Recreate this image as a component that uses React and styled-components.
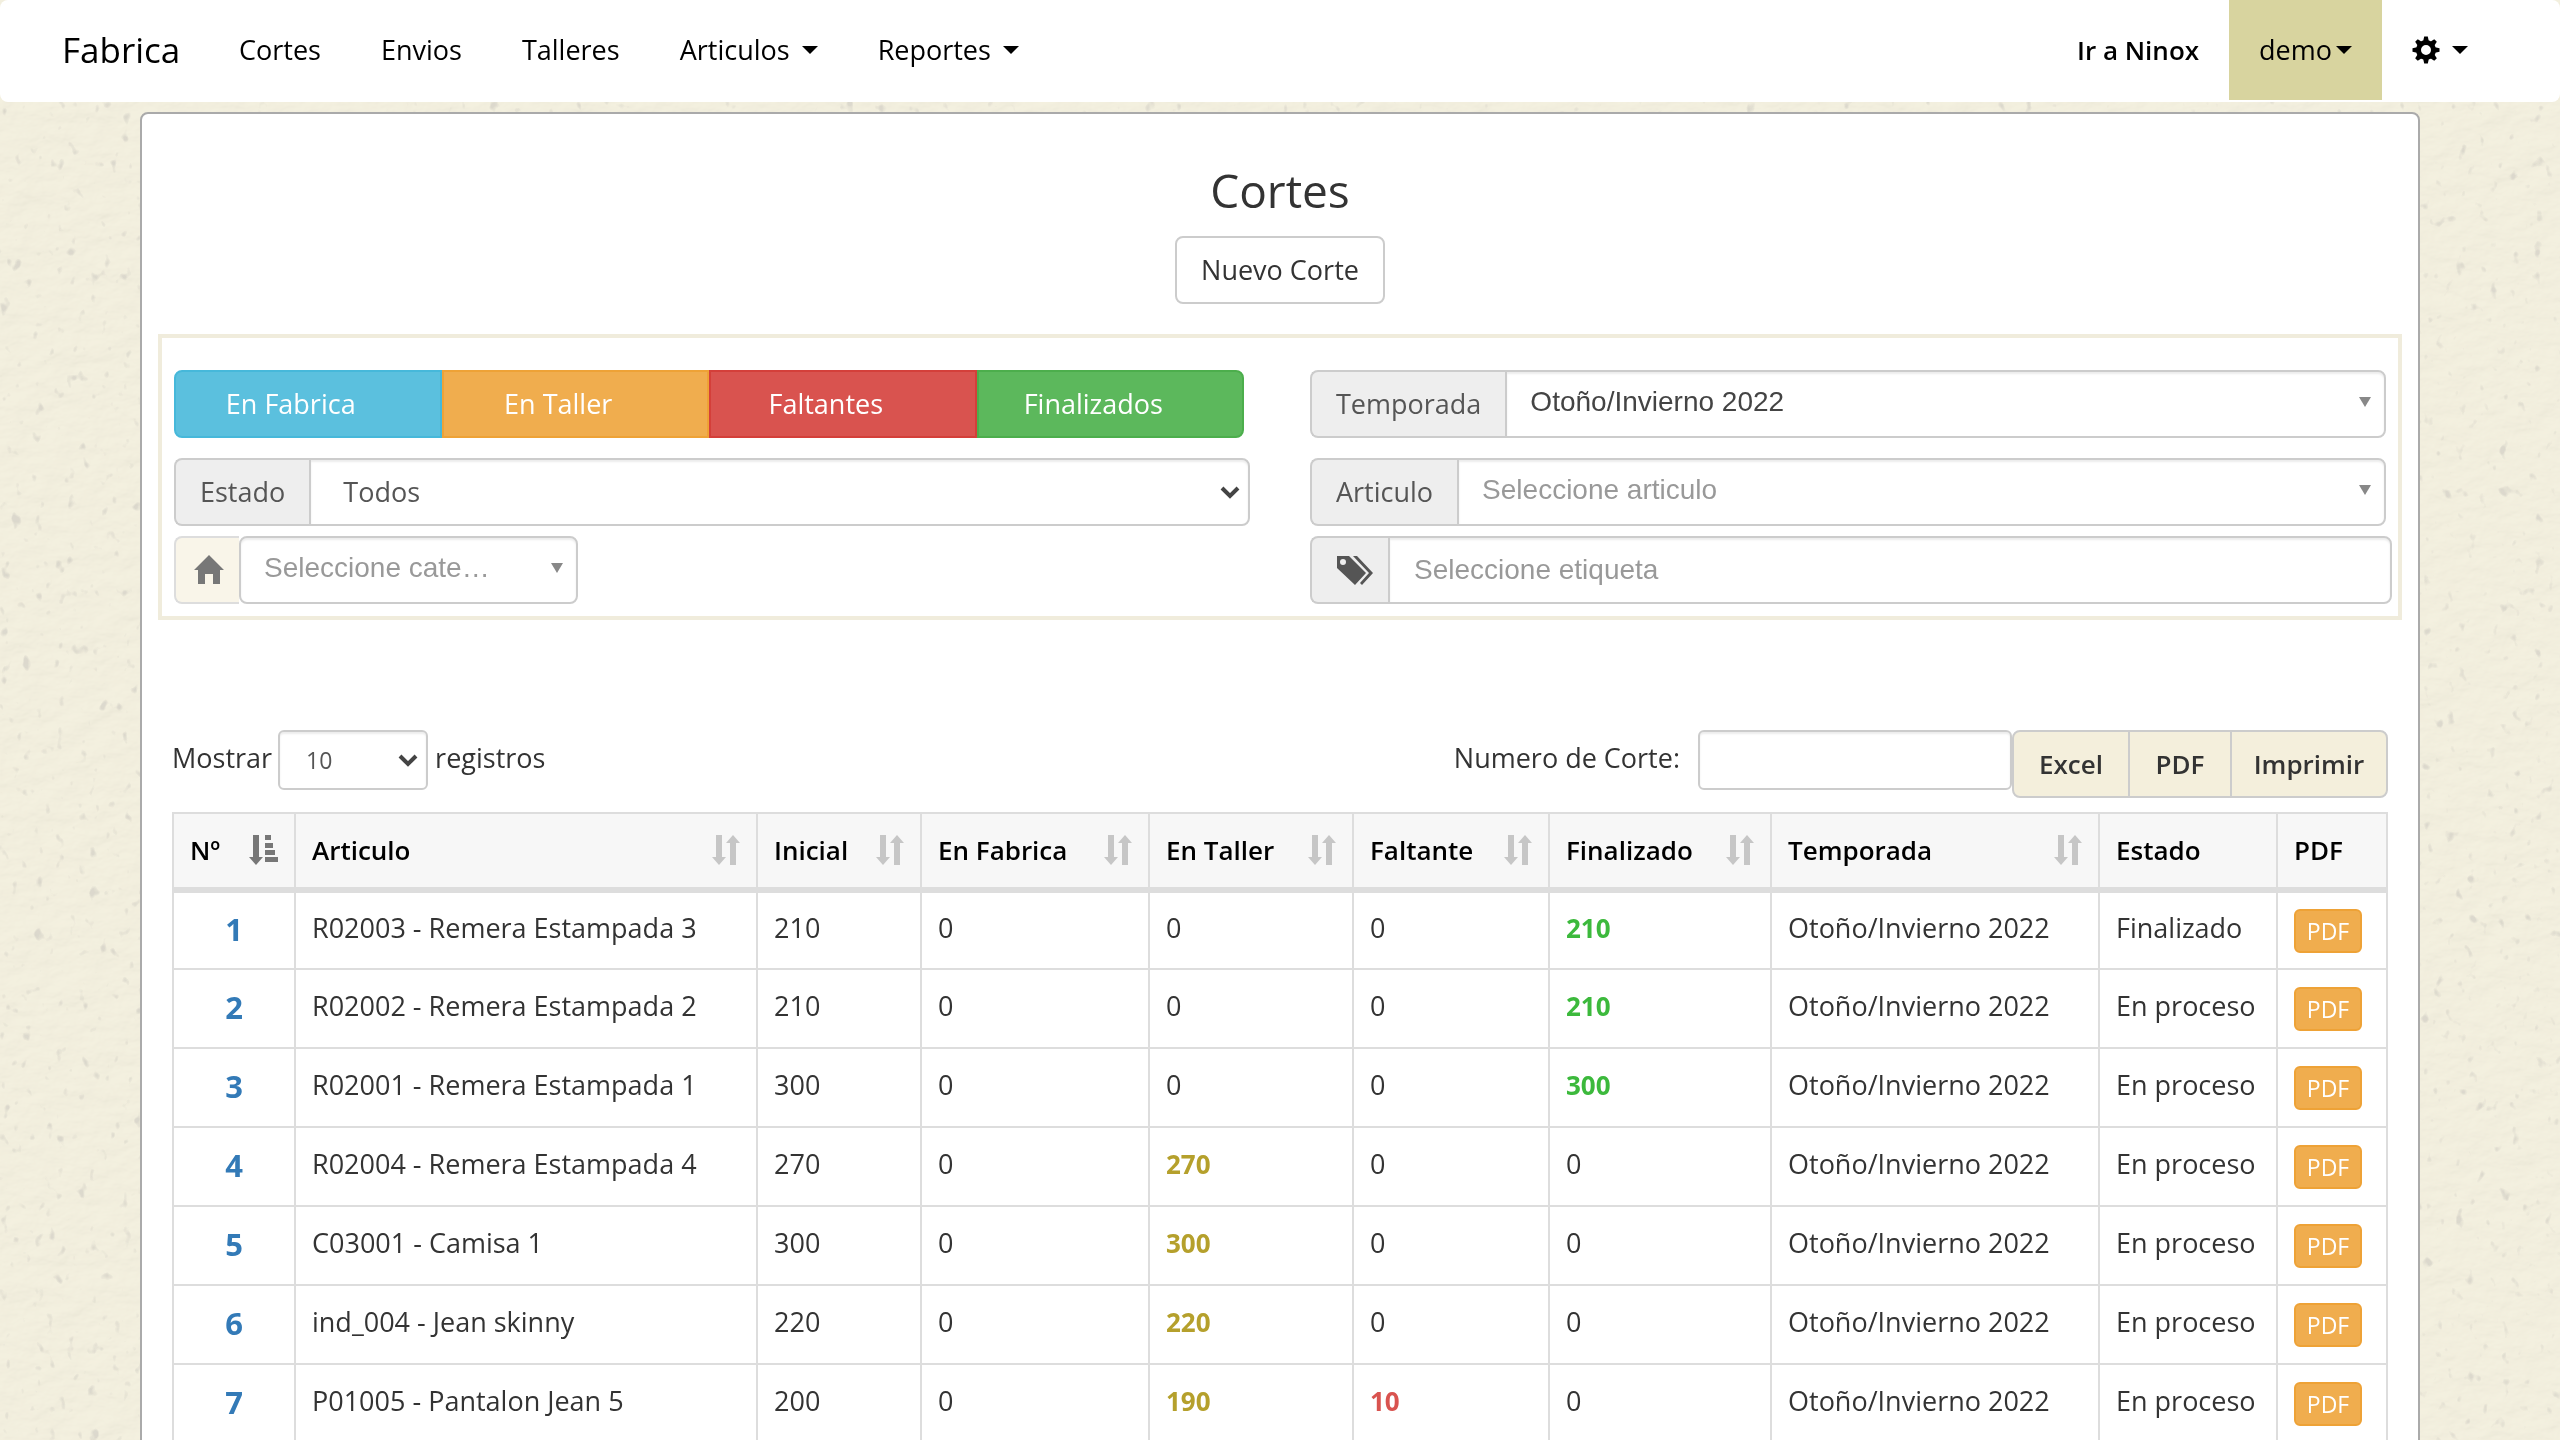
import React, { useState } from 'react';
import styled, { createGlobalStyle, css } from 'styled-components';

const GlobalStyle = createGlobalStyle`
  * {
    box-sizing: border-box;
  }

  body {
    margin: 0;
    overflow: hidden;
    background: #f1eedd;
    color: #333;
    font-family: 'Open Sans', 'Noto Sans', sans-serif;
    font-size: 27px;
    line-height: 40px;
  }

  button,
  input,
  select {
    font: inherit;
    color: inherit;
  }
`;

const Paper = styled.svg`
  position: fixed;
  inset: 0;
  z-index: -1;
  width: 100%;
  height: 100%;
`;

const Navbar = styled.nav`
  display: flex;
  justify-content: space-between;
  height: 102px;
  padding: 0 62px;
  background: #fff;
  border-radius: 8px;
  color: #000;
`;

const NavGroup = styled.div`
  display: flex;
  align-items: flex-start;
`;

const Brand = styled.a`
  width: 147px;
  color: #000;
  font-size: 35px;
  line-height: 100px;
  text-decoration: none;
`;

const NavLink = styled.a`
  display: flex;
  align-items: center;
  gap: ${(p) => (p.$tight ? '4px' : '12px')};
  height: 100px;
  padding: 0 30px;
  color: #000;
  background: ${(p) => (p.$active ? '#d8d49f' : 'transparent')};
  font-size: ${(p) => (p.$strong ? '26px' : '27px')};
  font-weight: ${(p) => (p.$strong ? 600 : 400)};
  text-decoration: none;
`;

const Caret = styled.span`
  border-top: 8px solid currentColor;
  border-left: 8px solid transparent;
  border-right: 8px solid transparent;
`;

const Panel = styled.main`
  min-height: 1400px;
  margin: 10px 140px 0;
  padding: 42px 16px;
  background: #fff;
  border: 2px solid #aaa;
  border-radius: 8px;
`;

const Heading = styled.header`
  display: flex;
  flex-direction: column;
  align-items: center;
  gap: 12px;
`;

const Title = styled.h1`
  margin: 0;
  font-size: 46px;
  font-weight: 400;
  line-height: 68px;
`;

const NewButton = styled.button`
  height: 68px;
  padding: 0 24px;
  background: #fff;
  border: 2px solid #ccc;
  border-radius: 8px;
`;

const Filters = styled.section`
  display: grid;
  grid-template-columns: 1076fr 1082fr;
  gap: 60px;
  margin-top: 30px;
  padding: 32px 6px 12px 12px;
  border: 4px solid #f0ecdc;
`;

const FilterColumn = styled.div`
  display: flex;
  flex-direction: column;
`;

const StatusGroup = styled.div`
  display: grid;
  grid-template-columns: repeat(4, 1fr);
  margin: 0 6px 20px 0;
`;

const StatusButton = styled.button`
  height: 68px;
  padding: 0 34px 0 0;
  color: #fff;
  background: ${(p) => p.$bg};
  border: 2px solid ${(p) => p.$border};

  &:first-child {
    border-radius: 8px 0 0 8px;
  }

  &:last-child {
    border-radius: 0 8px 8px 0;
  }
`;

const Field = styled.div`
  display: flex;
  width: ${(p) => p.$width || 'auto'};
  margin: ${(p) => p.$margin || '0'};
`;

const Addon = styled.label`
  display: flex;
  flex: none;
  align-items: center;
  height: 68px;
  padding: 0 24px;
  color: #555;
  background: #eee;
  border: 2px solid #ccc;
  border-right: 0;
  border-radius: 8px 0 0 8px;
`;

const IconAddon = styled(Addon)`
  justify-content: flex-end;
  width: ${(p) => p.$width};
  padding: 0 15px;
  background: ${(p) => (p.$soft ? '#f9f5e9' : '#eee')};
  border-color: ${(p) => (p.$soft ? '#ddd' : '#ccc')};
`;

const boxStyle = css`
  height: 68px;
  background: #fff;
  border: 2px solid #ccc;
  border-radius: ${(p) => (p.$round ? '8px' : '0 8px 8px 0')};
  box-shadow: inset 0 2px 2px rgba(0, 0, 0, 0.075);
  outline: none;
`;

const SelectWrap = styled.div`
  position: relative;
  flex: 1;
  min-width: 0;
`;

const Select = styled.select`
  ${boxStyle}
  display: block;
  width: 100%;
  padding: 0 32px;
  color: #555;
  appearance: none;
`;

const ChosenSelect = styled(Select)`
  padding: 0 60px 4px 23px;
  color: ${(p) => (p.$empty ? '#999' : '#444')};
  font-family: 'Liberation Sans', Arial, sans-serif;
  font-size: 28px;
  text-overflow: ellipsis;
`;

const Chevron = styled.svg`
  position: absolute;
  top: 50%;
  right: 10px;
  width: 20px;
  height: 14px;
  margin-top: -6px;
  pointer-events: none;
`;

const Arrow = styled.span`
  position: absolute;
  top: 27px;
  right: 15px;
  border-top: 10px solid #888;
  border-left: 6px solid transparent;
  border-right: 6px solid transparent;
  pointer-events: none;
`;

const TagInput = styled.input`
  ${boxStyle}
  flex: 1;
  min-width: 0;
  padding: 0 24px;
  font-family: 'Liberation Sans', Arial, sans-serif;
  font-size: 28px;

  &::placeholder {
    color: #999;
    opacity: 1;
  }
`;

const Toolbar = styled.div`
  display: flex;
  justify-content: space-between;
  align-items: flex-start;
  margin: 110px 14px 14px;
`;

const ToolGroup = styled.div`
  display: flex;
  align-items: flex-start;
  line-height: 56px;
`;

const LengthWrap = styled(SelectWrap)`
  flex: none;
  width: 150px;
  margin: 0 7px 0 6px;
`;

const LengthSelect = styled(Select)`
  height: 60px;
  padding: 0 26px;
  border-radius: 6px;
  font-size: 23px;
`;

const SearchInput = styled.input`
  ${boxStyle}
  width: 314px;
  height: 60px;
  margin-left: 18px;
  padding: 0 20px;
  border-radius: 6px;
`;

const ExportButton = styled.button`
  width: ${(p) => p.$width};
  height: 68px;
  padding: 0;
  margin-left: -2px;
  background: #f4efdc;
  border: 2px solid #ccc;
  font-size: 26px;
  font-weight: 600;

  &:first-of-type {
    margin-left: 0;
    border-radius: 8px 0 0 8px;
  }

  &:last-of-type {
    border-radius: 0 8px 8px 0;
  }
`;

const TableArea = styled.div`
  padding: 0 14px;
`;

const Table = styled.table`
  width: 100%;
  border-collapse: collapse;
  table-layout: fixed;
`;

const Th = styled.th`
  height: 77px;
  padding: 0 16px 2px;
  background: #f7f7f7;
  border: 2px solid #ddd;
  border-bottom-width: 6px;
  color: #000;
  font-size: 26px;
  font-weight: 600;
  text-align: left;
  white-space: nowrap;
`;

const ThContent = styled.div`
  display: flex;
  align-items: center;
  justify-content: space-between;
`;

const Td = styled.td`
  height: 79px;
  padding: 0 16px 6px;
  border: 2px solid #ddd;
  white-space: nowrap;
  color: ${(p) => p.$color || 'inherit'};
  font-size: ${(p) => (p.$color ? '26px' : '27px')};
  font-weight: ${(p) => (p.$color ? 700 : 400)};
`;

const NumberCell = styled(Td)`
  padding-bottom: 2px;
  text-align: center;
`;

const NumberLink = styled.a`
  color: #337ab7;
  font-size: 31px;
  font-weight: 700;
  text-decoration: none;
`;

const PdfCell = styled(Td)`
  padding: 0 0 0 16px;
`;

const PdfButton = styled.button`
  display: block;
  width: 68px;
  height: 44px;
  padding: 0;
  color: #fff;
  background: #f0ad4e;
  border: 2px solid #eea236;
  border-radius: 6px;
  font-size: 23px;
  line-height: 36px;
`;

const SortIcon = ({ active }) =>
  active ? (
    <svg width="29" height="30" viewBox="0 0 29 30" fill="#777">
      <path d="M4 0h6v22h4l-7 8-7-8h4z" />
      <path d="M16 0h6v5h-6zM16 8h8v5h-8zM16 15h10v5H16zM16 22h13v5H16z" />
    </svg>
  ) : (
    <svg width="28" height="30" viewBox="0 0 28 30" fill="#c6c6c6">
      <path d="M4 0h6v22h4l-7 8-7-8h4z" />
      <path d="M18 30h6V8h4l-7-8-7 8h4z" />
    </svg>
  );

const GearIcon = () => (
  <svg width="28" height="28" viewBox="0 0 28 28">
    <circle cx="14" cy="14" r="7.5" fill="none" stroke="#000" strokeWidth="5" />
    {[0, 45, 90, 135, 180, 225, 270, 315].map((angle) => (
      <path key={angle} d="M11 6L12.2 0.5H15.8L17 6z" transform={`rotate(${angle} 14 14)`} />
    ))}
  </svg>
);

const HomeIcon = () => (
  <svg width="30" height="30" viewBox="0 0 30 30" fill="#777">
    <path d="M15 0l15 15h-4v14h-7V19h-8v10H4V15H0z" />
  </svg>
);

const TagsIcon = () => (
  <svg width="36" height="29" viewBox="0 0 36 29" fill="#555">
    <path
      fillRule="evenodd"
      d="M0 0h12l17 17-11 12L0 12zM6 3a3 3 0 1 0 0 6 3 3 0 0 0 0-6z"
    />
    <path d="M16 0h4l16 17-11 12-2-2 9-10z" />
  </svg>
);

const ChevronIcon = () => (
  <Chevron viewBox="0 0 20 14" fill="none" stroke="#444" strokeWidth="4">
    <path d="M2 2l8 8 8-8" />
  </Chevron>
);

const PaperTexture = () => (
  <Paper aria-hidden="true">
    <defs>
      <filter id="fibre" x="0" y="0" width="100%" height="100%">
        <feTurbulence type="fractalNoise" baseFrequency="0.03 0.05" numOctaves="4" seed="8" />
        <feDiffuseLighting surfaceScale="2" diffuseConstant="1" lightingColor="#fbf6e6">
          <feDistantLight azimuth="235" elevation="70" />
        </feDiffuseLighting>
      </filter>
      <filter id="specks" x="0" y="0" width="100%" height="100%">
        <feTurbulence type="fractalNoise" baseFrequency="0.09 0.07" numOctaves="2" seed="21" />
        <feColorMatrix values="0 0 0 0 0.62  0 0 0 0 0.6  0 0 0 0 0.54  7 0 0 0 -4.7" />
      </filter>
    </defs>
    <rect width="100%" height="100%" filter="url(#fibre)" opacity="0.3" />
    <rect width="100%" height="100%" filter="url(#specks)" opacity="0.6" />
  </Paper>
);

const statuses = [
  { label: 'En Fabrica', bg: '#5bc0de', border: '#46b8da' },
  { label: 'En Taller', bg: '#f0ad4e', border: '#eea236' },
  { label: 'Faltantes', bg: '#d9534f', border: '#d43f3a' },
  { label: 'Finalizados', bg: '#5cb85c', border: '#4cae4c' },
];

const columns = [
  { label: 'Nº', width: 122, sort: true, active: true },
  { label: 'Articulo', width: 462, sort: true },
  { label: 'Inicial', width: 164, sort: true },
  { label: 'En Fabrica', width: 228, sort: true },
  { label: 'En Taller', width: 204, sort: true },
  { label: 'Faltante', width: 196, sort: true },
  { label: 'Finalizado', width: 222, sort: true },
  { label: 'Temporada', width: 328, sort: true },
  { label: 'Estado', width: 178 },
  { label: 'PDF', width: 110 },
];

const totalWidth = columns.reduce((sum, c) => sum + c.width, 0);

const cortes = [
  { id: 1, articulo: 'R02003 - Remera Estampada 3', inicial: 210, taller: 0, faltante: 0, finalizado: 210, estado: 'Finalizado' },
  { id: 2, articulo: 'R02002 - Remera Estampada 2', inicial: 210, taller: 0, faltante: 0, finalizado: 210, estado: 'En proceso' },
  { id: 3, articulo: 'R02001 - Remera Estampada 1', inicial: 300, taller: 0, faltante: 0, finalizado: 300, estado: 'En proceso' },
  { id: 4, articulo: 'R02004 - Remera Estampada 4', inicial: 270, taller: 270, faltante: 0, finalizado: 0, estado: 'En proceso' },
  { id: 5, articulo: 'C03001 - Camisa 1', inicial: 300, taller: 300, faltante: 0, finalizado: 0, estado: 'En proceso' },
  { id: 6, articulo: 'ind_004 - Jean skinny', inicial: 220, taller: 220, faltante: 0, finalizado: 0, estado: 'En proceso' },
  { id: 7, articulo: 'P01005 - Pantalon Jean 5', inicial: 200, taller: 190, faltante: 10, finalizado: 0, estado: 'En proceso' },
];

const App = () => {
  const [search, setSearch] = useState('');
  const rows = cortes.filter((c) => String(c.id).includes(search.trim()));

  return (
    <>
      <GlobalStyle />
      <PaperTexture />
      <Navbar>
        <NavGroup>
          <Brand href="#">Fabrica</Brand>
          <NavLink href="#cortes">Cortes</NavLink>
          <NavLink href="#envios">Envios</NavLink>
          <NavLink href="#talleres">Talleres</NavLink>
          <NavLink href="#articulos">Articulos <Caret /></NavLink>
          <NavLink href="#reportes">Reportes <Caret /></NavLink>
        </NavGroup>
        <NavGroup>
          <NavLink href="#ninox" $strong>Ir a Ninox</NavLink>
          <NavLink href="#demo" $active $tight>demo<Caret /></NavLink>
          <NavLink href="#config" aria-label="Configuracion"><GearIcon /><Caret /></NavLink>
        </NavGroup>
      </Navbar>

      <Panel>
        <Heading>
          <Title>Cortes</Title>
          <NewButton type="button">Nuevo Corte</NewButton>
        </Heading>

        <Filters>
          <FilterColumn>
            <StatusGroup>
              {statuses.map((s) => (
                <StatusButton key={s.label} type="button" $bg={s.bg} $border={s.border}>
                  {s.label}
                </StatusButton>
              ))}
            </StatusGroup>
            <Field $margin="0 0 10px">
              <Addon htmlFor="estado">Estado</Addon>
              <SelectWrap>
                <Select id="estado"><option>Todos</option></Select>
                <ChevronIcon />
              </SelectWrap>
            </Field>
            <Field $width="404px">
              <IconAddon htmlFor="categoria" aria-label="Categoria" $width="65px" $soft>
                <HomeIcon />
              </IconAddon>
              <SelectWrap>
                <ChosenSelect id="categoria" $empty $round>
                  <option>Seleccione cate…</option>
                </ChosenSelect>
                <Arrow />
              </SelectWrap>
            </Field>
          </FilterColumn>

          <FilterColumn>
            <Field $margin="0 6px 20px 0">
              <Addon htmlFor="temporada">Temporada</Addon>
              <SelectWrap>
                <ChosenSelect id="temporada"><option>Otoño/Invierno 2022</option></ChosenSelect>
                <Arrow />
              </SelectWrap>
            </Field>
            <Field $margin="0 6px 10px 0">
              <Addon htmlFor="articulo">Articulo</Addon>
              <SelectWrap>
                <ChosenSelect id="articulo" $empty><option>Seleccione articulo</option></ChosenSelect>
                <Arrow />
              </SelectWrap>
            </Field>
            <Field>
              <IconAddon htmlFor="etiqueta" aria-label="Etiqueta" $width="78px">
                <TagsIcon />
              </IconAddon>
              <TagInput id="etiqueta" placeholder="Seleccione etiqueta" />
            </Field>
          </FilterColumn>
        </Filters>

        <Toolbar>
          <ToolGroup>
            <label htmlFor="registros">Mostrar</label>
            <LengthWrap>
              <LengthSelect id="registros"><option>10</option></LengthSelect>
              <ChevronIcon />
            </LengthWrap>
            <span>registros</span>
          </ToolGroup>
          <ToolGroup>
            <label htmlFor="numero">Numero de Corte:</label>
            <SearchInput id="numero" value={search} onChange={(e) => setSearch(e.target.value)} />
            <ExportButton type="button" $width="118px">Excel</ExportButton>
            <ExportButton type="button" $width="104px">PDF</ExportButton>
            <ExportButton type="button" $width="158px">Imprimir</ExportButton>
          </ToolGroup>
        </Toolbar>

        <TableArea>
          <Table>
            <colgroup>
              {columns.map((c) => (
                <col key={c.label} style={{ width: `${(c.width / totalWidth) * 100}%` }} />
              ))}
            </colgroup>
            <thead>
              <tr>
                {columns.map((c) => (
                  <Th key={c.label} scope="col">
                    <ThContent>
                      {c.label}
                      {c.sort && <SortIcon active={c.active} />}
                    </ThContent>
                  </Th>
                ))}
              </tr>
            </thead>
            <tbody>
              {rows.map((c) => (
                <tr key={c.id}>
                  <NumberCell><NumberLink href={`#corte-${c.id}`}>{c.id}</NumberLink></NumberCell>
                  <Td>{c.articulo}</Td>
                  <Td>{c.inicial}</Td>
                  <Td>0</Td>
                  <Td $color={c.taller > 0 && '#b5a02c'}>{c.taller}</Td>
                  <Td $color={c.faltante > 0 && '#d9534f'}>{c.faltante}</Td>
                  <Td $color={c.finalizado > 0 && '#3cb93c'}>{c.finalizado}</Td>
                  <Td>Otoño/Invierno 2022</Td>
                  <Td>{c.estado}</Td>
                  <PdfCell><PdfButton type="button">PDF</PdfButton></PdfCell>
                </tr>
              ))}
            </tbody>
          </Table>
        </TableArea>
      </Panel>
    </>
  );
};

export default App;
